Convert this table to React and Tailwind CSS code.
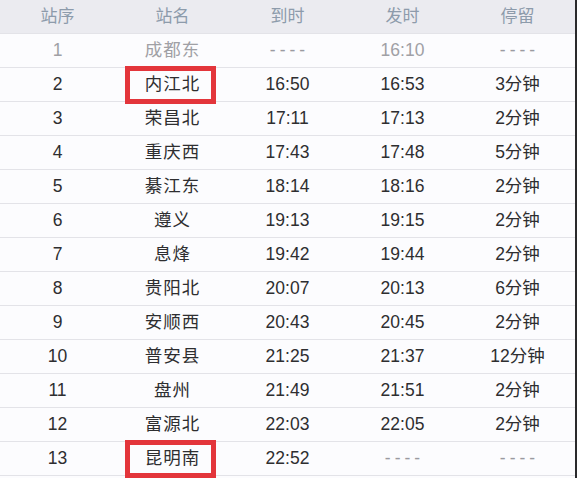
import React from 'react';

const rows = [
  ['1', '成都东', '----', '16:10', '----'],
  ['2', '内江北', '16:50', '16:53', '3分钟'],
  ['3', '荣昌北', '17:11', '17:13', '2分钟'],
  ['4', '重庆西', '17:43', '17:48', '5分钟'],
  ['5', '綦江东', '18:14', '18:16', '2分钟'],
  ['6', '遵义', '19:13', '19:15', '2分钟'],
  ['7', '息烽', '19:42', '19:44', '2分钟'],
  ['8', '贵阳北', '20:07', '20:13', '6分钟'],
  ['9', '安顺西', '20:43', '20:45', '2分钟'],
  ['10', '普安县', '21:25', '21:37', '12分钟'],
  ['11', '盘州', '21:49', '21:51', '2分钟'],
  ['12', '富源北', '22:03', '22:05', '2分钟'],
  ['13', '昆明南', '22:52', '----', '----'],
];

// stations boxed in red
const marked = ['2', '13'];

export default function App() {
  return (
    <div
      className="w-[577px] h-[478px] overflow-hidden flex bg-[#fcfcfe]"
      style={{ fontFamily: '"Liberation Sans", "Noto Sans CJK SC", sans-serif' }}
    >
      <div className="flex-1 flex flex-col">
        {/* Header */}
        <div className="h-[33px] shrink-0 grid grid-cols-5 items-center bg-[#ebebf0] text-[17px] text-[#8d9bab]">
          {['站序', '站名', '到时', '发时', '停留'].map((h) => (
            <div key={h} className="text-center leading-none">{h}</div>
          ))}
        </div>
        {/* Rows */}
        {rows.map((r, i) => (
          <div
            key={r[0]}
            className={`h-[34px] shrink-0 grid grid-cols-5 border-t border-[#e3e3e8] text-[17.5px] ${i === 0 ? 'text-[#a0a0a5]' : 'text-[#2e2e30]'}`}
          >
            {r.map((c, j) => (
              <div key={j} className="relative h-full flex items-center justify-center leading-none">
                {j === 1 && marked.includes(r[0]) && (
                  <div className="absolute left-[10px] top-[-2px] w-[91px] h-[38px] border-[5px] border-[#e3353b]" />
                )}
                {c === '----' ? (
                  <span className="relative tracking-[4px] pl-[4px] text-[#9a9aa0]">{c}</span>
                ) : (
                  <span className={`relative ${j === 1 ? 'tracking-[1px]' : ''}`}>{c}</span>
                )}
              </div>
            ))}
          </div>
        ))}
        <div className="border-t border-[#e3e3e8]" />
      </div>
      <div className="w-[2px] shrink-0 bg-[#2a2a2c]" />
    </div>
  );
}
